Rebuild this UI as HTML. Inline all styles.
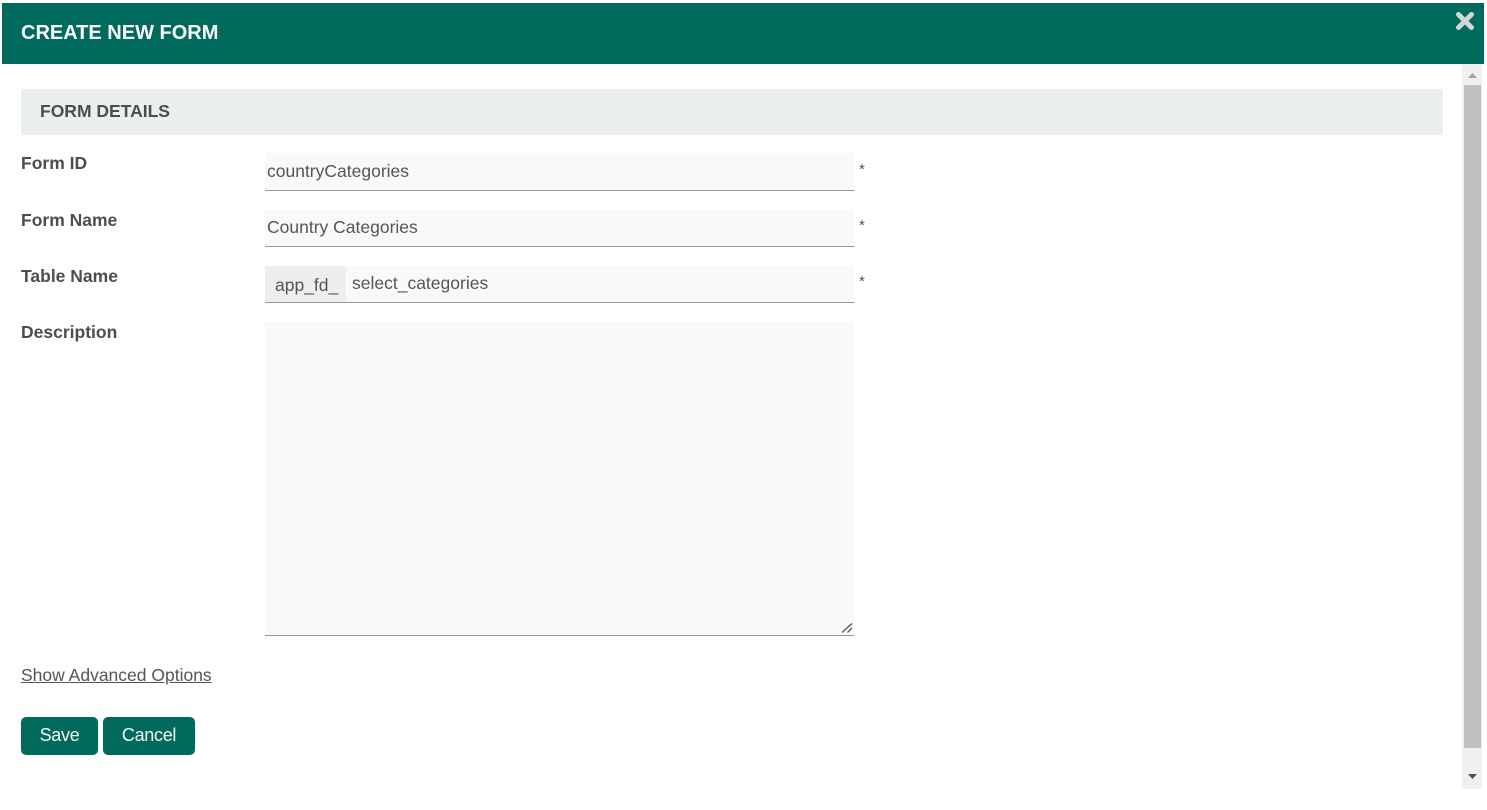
<!DOCTYPE html>
<html><head><meta charset="utf-8">
<style>
html,body{margin:0;padding:0;background:#fff;width:1487px;height:810px;overflow:hidden;font-family:"Liberation Sans",Arial,sans-serif;color:#555}
div,a{position:absolute;white-space:nowrap}
.l{left:21px;font-size:17.500px;font-weight:bold;color:#4d4d4d;line-height:20px}
.i{left:265px;width:589px;background:#f9f9f9;border-bottom:1px solid #999;box-sizing:border-box}
.t{font-size:17.500px;line-height:20px;color:#555}
.s{left:859px;font-size:15px;line-height:16px;color:#555}
.b{background:#006b5c;border-radius:5px;color:#f4f4f4;font-size:18px;letter-spacing:-.3px;line-height:36px;text-align:center;top:717px;height:38px}
</style></head><body>
<div style="left:2px;top:3px;width:1482px;height:61px;background:#006b5c"></div>
<div style="left:21px;top:21px;font-size:20px;font-weight:bold;color:#fff;line-height:25px">CREATE NEW FORM</div>
<svg style="position:absolute;left:1455px;top:11px" width="20" height="20" viewBox="0 0 20 20"><path d="M3.500 3.500L16.500 16.500M16.500 3.500L3.500 16.500" stroke="#d6d6d6" stroke-width="5" stroke-linecap="round"/></svg>

<div style="left:1462px;top:64px;width:20px;height:725px;background:#f0f0f0"></div>
<div style="left:1464px;top:85px;width:17px;height:663px;background:#c0c0c0"></div>
<svg style="position:absolute;left:1462px;top:64px" width="20" height="725"><path d="M6 14L15 14L10.500 9Z" fill="#a3a3a3"/><path d="M6 710L15 710L10.500 715Z" fill="#505050"/></svg>

<div style="left:21px;top:89px;width:1422px;height:46px;background:#ecefef"></div>
<div style="left:40px;top:101px;font-size:17.500px;font-weight:bold;color:#4d4d4d;line-height:20px">FORM DETAILS</div>

<div class="l" style="top:153px">Form ID</div>
<div class="i" style="top:153px;height:38px"></div>
<div class="t" style="left:267px;top:161px">countryCategories</div>
<div class="s" style="top:162px">*</div>

<div class="l" style="top:210px">Form Name</div>
<div class="i" style="top:210px;height:37px"></div>
<div class="t" style="left:267px;top:217px">Country Categories</div>
<div class="s" style="top:218px">*</div>

<div class="l" style="top:266px">Table Name</div>
<div class="i" style="top:266px;height:37px"></div>
<div style="left:265px;top:266px;width:81px;height:36px;background:#eee"></div>
<div class="t" style="left:275px;top:275px">app_fd_</div>
<div class="t" style="left:352px;top:273px">select_categories</div>
<div class="s" style="top:274px">*</div>

<div class="l" style="top:322px">Description</div>
<div class="i" style="top:322px;height:314px"></div>
<svg style="position:absolute;left:840px;top:621px" width="14" height="14"><path d="M2 11.500L12 2.500M7.500 11.500L12 7" stroke="#555" stroke-width="1.300" fill="none"/></svg>

<a style="left:21px;top:665px;font-size:17.500px;line-height:20px;color:#555;text-decoration:underline">Show Advanced Options</a>

<div class="b" style="left:21px;width:77px">Save</div>
<div class="b" style="left:103px;width:92px">Cancel</div>
</body></html>
